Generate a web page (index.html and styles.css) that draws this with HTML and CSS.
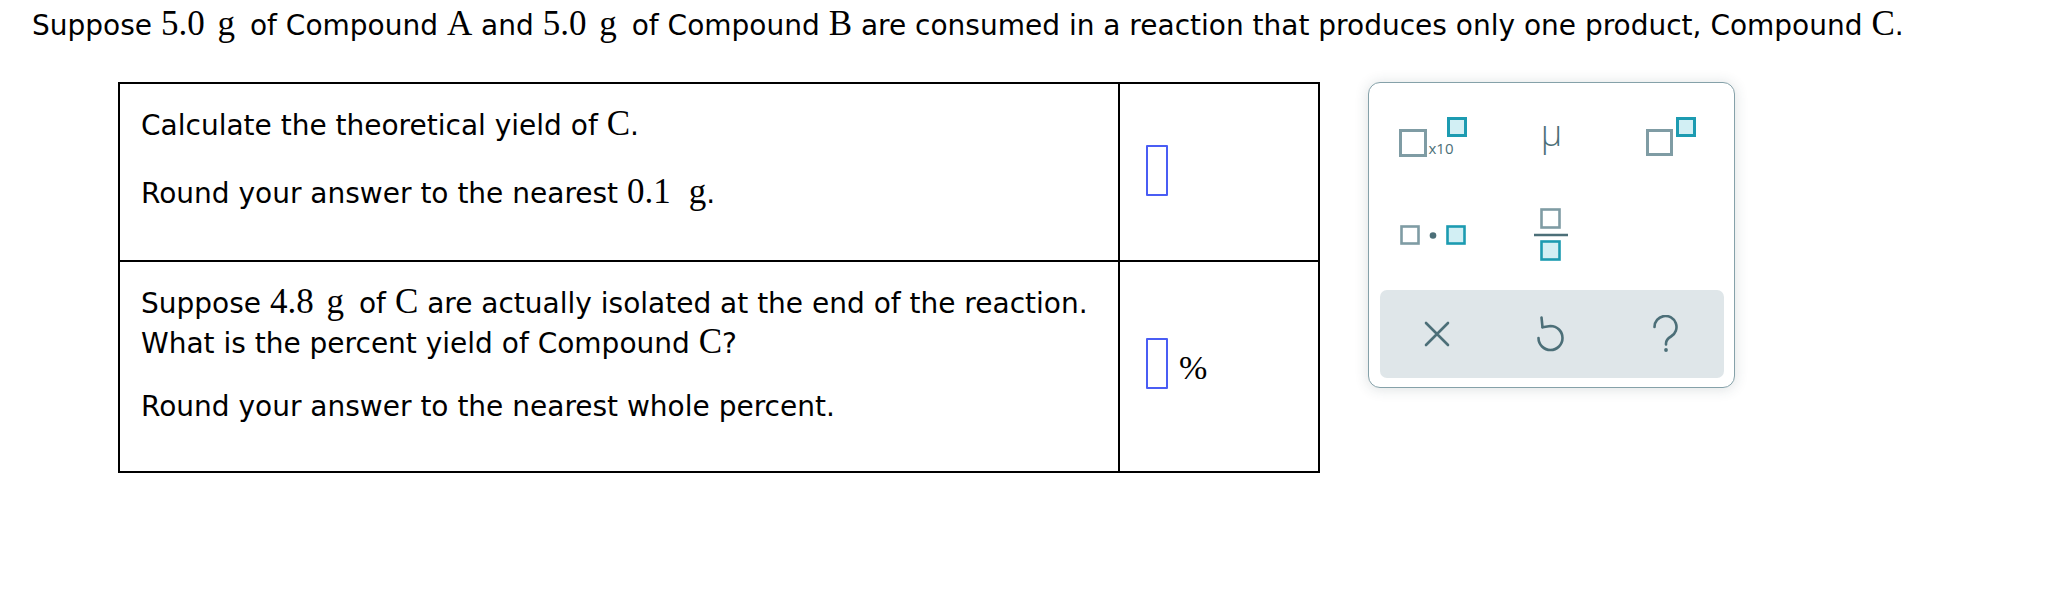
FILE: index.html
```html
<!DOCTYPE html>
<html lang="en">
<head>
<meta charset="utf-8">
<title>Percent yield</title>
<link rel="stylesheet" href="styles.css">
</head>
<body>
<p class="intro">Suppose <span class="m">5.0</span> <span class="m unit">g</span> of Compound <span class="m">A</span> and <span class="m">5.0</span> <span class="m unit">g</span> of Compound <span class="m">B</span> are consumed in a reaction that produces only one product, Compound <span class="m">C</span>.</p>

<div class="workspace">
  <div class="qtable">
    <div class="qcell q1">
      <p class="line">Calculate the theoretical yield of <span class="m">C</span>.</p>
      <p class="line gap1">Round your answer to the nearest <span class="m">0.1</span> <span class="m unit-end">g</span>.</p>
    </div>
    <div class="acell a1">
      <span class="ansbox"></span>
    </div>
    <div class="qcell q2">
      <p class="line">Suppose <span class="m">4.8</span> <span class="m unit">g</span> of <span class="m">C</span> are actually isolated at the end of the reaction.<br>What is the percent yield of Compound <span class="m">C</span>?</p>
      <p class="line gap2">Round your answer to the nearest whole percent.</p>
    </div>
    <div class="acell a2">
      <span class="ansbox"></span><span class="pct">%</span>
    </div>
  </div>

  <div class="keypad">
    <div class="keys">
      <button class="key" type="button" aria-label="scientific notation">
        <svg width="76" height="40" viewBox="0 0 76 40">
          <rect x="1.5" y="13.5" width="25" height="25" fill="none" stroke="#7f9ca4" stroke-width="3"/>
          <rect x="49.5" y="1.5" width="17" height="17" fill="#d2eff4" stroke="#1c9bb1" stroke-width="3"/>
          <text x="29.5" y="36.5" class="x10">x10</text>
        </svg>
      </button>
      <button class="key mu" type="button" aria-label="micro">μ</button>
      <button class="key" type="button" aria-label="superscript">
        <svg width="59" height="40" viewBox="0 0 59 40">
          <rect x="10.5" y="13.5" width="24" height="24" fill="none" stroke="#7f9ca4" stroke-width="3"/>
          <rect x="40.5" y="1.5" width="17" height="17" fill="#d2eff4" stroke="#1c9bb1" stroke-width="3"/>
        </svg>
      </button>
      <button class="key" type="button" aria-label="multiply">
        <svg width="73" height="20" viewBox="0 0 73 20">
          <rect x="1.5" y="1.5" width="17" height="17" fill="none" stroke="#7f9ca4" stroke-width="2.6"/>
          <circle cx="33" cy="10.5" r="3.3" fill="#4c6f78"/>
          <rect x="47.5" y="1.5" width="17" height="17" fill="#d2eff4" stroke="#1c9bb1" stroke-width="2.6"/>
        </svg>
      </button>
      <button class="key" type="button" aria-label="fraction">
        <svg width="34" height="54" viewBox="0 0 34 54">
          <rect x="7.5" y="1.5" width="18" height="18" fill="none" stroke="#7f9ca4" stroke-width="2.6"/>
          <line x1="0" y1="27" x2="34" y2="27" stroke="#4c6f78" stroke-width="2.6"/>
          <rect x="7.5" y="33.5" width="18" height="18" fill="#d2eff4" stroke="#1c9bb1" stroke-width="2.6"/>
        </svg>
      </button>
      <span class="key empty"></span>
    </div>
    <div class="bar">
      <button class="key" type="button" aria-label="clear">
        <svg width="26" height="26" viewBox="0 0 26 26">
          <path d="M2 2 L24 24 M24 2 L2 24" stroke="#4c6f78" stroke-width="2.6" stroke-linecap="round" fill="none"/>
        </svg>
      </button>
      <button class="key" type="button" aria-label="undo">
        <svg width="30" height="37" viewBox="0 0 30 37">
          <path d="M2.5 23 A12 12 0 1 0 14.5 11 L6.5 12.2" stroke="#4c6f78" stroke-width="2.6" stroke-linecap="round" stroke-linejoin="round" fill="none"/>
          <path d="M6.5 12.2 L5.5 2.5" stroke="#4c6f78" stroke-width="2.6" stroke-linecap="round" fill="none"/>
        </svg>
      </button>
      <button class="key" type="button" aria-label="help">
        <svg width="28" height="38" viewBox="0 0 28 38">
          <path d="M2.5 12 A11 11 0 1 1 19 21.5 C15.5 23.5 14 25.5 14 28.5 L14 29.5" stroke="#4c6f78" stroke-width="2.6" stroke-linecap="round" fill="none"/>
          <circle cx="14" cy="35" r="1.9" fill="#4c6f78"/>
        </svg>
      </button>
    </div>
  </div>
</div>
</body>
</html>
```

FILE: styles.css
```css
html, body {
  margin: 0;
  padding: 0;
  background: #ffffff;
}

body {
  font-family: "DejaVu Sans", Verdana, sans-serif;
  font-size: 28px;
  color: #000;
}

.m {
  font-family: "Liberation Serif", "Times New Roman", serif;
  font-size: 35px;
  line-height: 20px;
}

.unit {
  margin-left: 4px;
  margin-right: 6px;
}

.unit-end {
  margin-left: 9px;
}

.intro {
  margin: 0;
  padding: 10px 0 0 32px;
  line-height: 32px;
}

.workspace {
  display: flex;
  align-items: flex-start;
  gap: 48px;
  margin: 40px 0 0 118px;
}

.qtable {
  display: grid;
  grid-template-columns: 1000px 198px;
  grid-template-rows: 178px 209px;
  border: 2px solid #000;
}

.qcell {
  border-right: 2px solid #000;
  padding: 22px 20px 0 21px;
  box-sizing: border-box;
}

.q1, .a1 {
  border-bottom: 2px solid #000;
}

.q2 {
  padding-top: 22px;
}

.line {
  margin: 0;
  line-height: 40px;
}

.gap1 {
  margin-top: 28px;
}

.gap2 {
  margin-top: 23px;
}

.acell {
  display: flex;
  align-items: center;
  padding-left: 26px;
}

.a1 {
  padding-bottom: 4px;
}

.a2 {
  padding-bottom: 6px;
}

.ansbox {
  display: inline-block;
  width: 18px;
  height: 47px;
  border: 2px solid #4a5df4;
  border-radius: 1px;
}

.pct {
  font-family: "Liberation Serif", "Times New Roman", serif;
  font-size: 34px;
  margin-left: 11px;
  margin-top: 8px;
}

.keypad {
  box-sizing: border-box;
  width: 367px;
  height: 306px;
  border: 1.5px solid #85a1a9;
  border-radius: 12px;
  box-shadow: 0 1px 14px rgba(40, 60, 70, 0.16);
  padding: 5px 10.5px 0 10.5px;
  background: #fff;
}

.keys {
  display: grid;
  grid-template-columns: repeat(3, 1fr);
  grid-auto-rows: 98px;
}

.key {
  display: flex;
  align-items: center;
  justify-content: center;
  border: 0;
  padding: 0;
  margin: 0;
  background: transparent;
  font: inherit;
}

.key svg {
  display: block;
}

.x10 {
  font-family: "Open Sans", "DejaVu Sans", sans-serif;
  font-size: 15px;
  fill: #4c6f78;
}

.mu {
  font-family: "Open Sans", "Lato", sans-serif;
  font-weight: 300;
  font-size: 36px;
  color: #4c6f78;
  padding-bottom: 10px;
}

.bar {
  margin-top: 5.5px;
  height: 88px;
  background: #dfe6e9;
  border-radius: 7px;
  display: grid;
  grid-template-columns: repeat(3, 1fr);
}
```
